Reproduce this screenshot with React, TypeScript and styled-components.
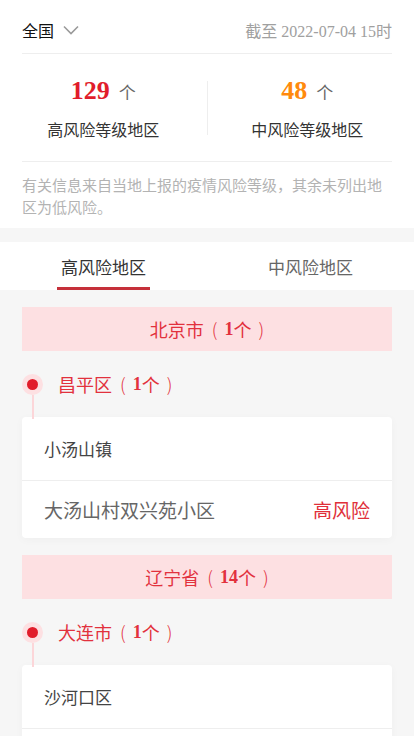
import React, { useState } from 'react'
import styled, { createGlobalStyle } from 'styled-components'

const GlobalStyle = createGlobalStyle`
  html, body {
    margin: 0;
    padding: 0;
    background: #f6f6f6;
  }

  body {
    font-family: "Noto Sans CJK SC", "Noto Sans", sans-serif;
    color: #333;
  }
`

const Page = styled.div`
  width: 414px;
  min-height: 736px;
  background: #f6f6f6;
`

const Summary = styled.section`
  background: #fff;
  padding: 0 22px;
`

const Header = styled.div`
  display: flex;
  align-items: center;
  justify-content: space-between;
  height: 47px;
  padding-top: 6px;
  border-bottom: 1px solid #eee;
`

const RegionPicker = styled.div`
  display: flex;
  align-items: center;
  gap: 9px;
  font-size: 16px;
  color: #111;
  cursor: pointer;
`

const UpdatedAt = styled.div`
  font-family: "Liberation Serif", "Noto Sans CJK SC", serif;
  font-size: 16px;
  color: #a0a0a0;
`

const Stats = styled.div`
  display: flex;
  align-items: center;
  height: 107px;
  margin: 0 -22px;
`

const StatCol = styled.div`
  box-sizing: border-box;
  flex: 0 0 calc(50% - 0.5px);
  display: flex;
  flex-direction: column;
  align-items: center;
  gap: 13px;

  &:last-child {
    padding-right: 7px;
  }
`

const StatNumber = styled.div<{ $color: string }>`
  display: flex;
  align-items: baseline;
  gap: 9px;
  height: 30px;
  font-size: 17px;
  color: #666;

  b {
    font-family: "Liberation Serif", serif;
    font-size: 26px;
    color: ${props => props.$color};
  }
`

const StatLabel = styled.div`
  font-size: 16px;
  line-height: 20px;
  color: #333;
`

const StatSeparator = styled.div`
  width: 1px;
  height: 54px;
  background: #eee;
`

const Note = styled.p`
  margin: 0;
  padding: 12px 0 10px;
  border-top: 1px solid #eee;
  font-size: 15px;
  line-height: 22px;
  color: #b3b3b3;
`

const Tabs = styled.div`
  display: flex;
  margin-top: 14px;
  height: 48px;
  background: #fff;
`

const Tab = styled.div<{ $active: boolean }>`
  position: relative;
  flex: 1;
  display: flex;
  align-items: center;
  justify-content: center;
  font-size: 17px;
  color: ${props => props.$active ? '#333' : '#666'};
  cursor: pointer;

  &::after {
    content: '';
    display: ${props => props.$active ? 'block' : 'none'};
    position: absolute;
    bottom: 0;
    left: 50%;
    width: 93px;
    height: 3px;
    margin-left: -47px;
    background: #c5303a;
  }
`

const List = styled.div`
  padding: 0 22px 24px;
`

const Province = styled.div`
  margin-top: 17px;
`

const ProvinceBanner = styled.div`
  display: flex;
  align-items: center;
  justify-content: center;
  height: 44px;
  background: #fde0e2;
  font-size: 18px;
  color: #e2313d;
`

const Count = styled.b`
  font-family: "Liberation Serif", serif;
  font-weight: bold;
`

// thin parens with air on both sides, e.g. 北京市 ( 1个 )
const Paren = styled.span<{ $side: 'open' | 'close' }>`
  margin: ${props => props.$side === 'open' ? '0 7px 0 8px' : '0 0 0 7px'};
  font-weight: 300;
`

const CityRow = styled.div`
  position: relative;
  display: flex;
  align-items: center;
  height: 66px;
  padding-left: 36px;
  font-size: 18px;
  color: #e2313d;
`

// pink ring with the red dot, plus the stem running down to the card
const CityMarker = styled.span`
  position: absolute;
  left: 0;
  top: 23px;
  width: 21px;
  height: 21px;
  border-radius: 50%;
  background: #fde0e2;

  &::before {
    content: '';
    position: absolute;
    left: 5px;
    top: 5px;
    width: 11px;
    height: 11px;
    border-radius: 50%;
    background: #e11d2b;
  }

  &::after {
    content: '';
    position: absolute;
    left: 10px;
    top: 21px;
    width: 2px;
    height: 24px;
    background: #fcd6d9;
  }
`

const Card = styled.div`
  background: #fff;
  border-radius: 4px;
  box-shadow: 0 2px 10px rgba(0, 0, 0, 0.03);
  overflow: hidden;
`

const TownRow = styled.div`
  display: flex;
  align-items: center;
  height: 63px;
  padding: 0 22px;
  font-size: 17px;
  color: #444;
`

const PlaceRow = styled.div`
  display: flex;
  align-items: center;
  justify-content: space-between;
  height: 57px;
  padding: 0 22px;
  border-top: 1px solid #eee;
  font-size: 19px;
  color: #666;
`

const RiskTag = styled.span`
  color: #e0303a;
`

function Chevron() {
  return (
    <svg width="16" height="10" viewBox="0 0 16 10" fill="none">
      <path d="M1 1.5 L8 8.5 L15 1.5" stroke="#9a9a9a" strokeWidth="1.6" />
    </svg>
  )
}

function CountLabel({ name, count }: { name: string, count: number }) {
  return (
    <>
      {name}
      <Paren $side="open">(</Paren>
      <Count>{count}</Count>个
      <Paren $side="close">)</Paren>
    </>
  )
}

interface Town {
  name: string
  places: string[]
}

interface City {
  name: string
  count: number
  towns: Town[]
}

interface ProvinceData {
  name: string
  count: number
  cities: City[]
}

const provinces: ProvinceData[] = [
  {
    name: '北京市',
    count: 1,
    cities: [
      {
        name: '昌平区',
        count: 1,
        towns: [{ name: '小汤山镇', places: ['大汤山村双兴苑小区'] }],
      },
    ],
  },
  {
    name: '辽宁省',
    count: 14,
    cities: [
      {
        name: '大连市',
        count: 1,
        towns: [{ name: '沙河口区', places: ['星海湾街道'] }],
      },
    ],
  },
]

export default function App() {
  const [tab, setTab] = useState<'high' | 'mid'>('high')

  return (
    <Page>
      <GlobalStyle />
      <Summary>
        <Header>
          <RegionPicker>
            全国
            <Chevron />
          </RegionPicker>
          <UpdatedAt>截至 2022-07-04 15时</UpdatedAt>
        </Header>
        <Stats>
          <StatCol>
            <StatNumber $color="#e11d2b"><b>129</b>个</StatNumber>
            <StatLabel>高风险等级地区</StatLabel>
          </StatCol>
          <StatSeparator />
          <StatCol>
            <StatNumber $color="#ff8a0d"><b>48</b>个</StatNumber>
            <StatLabel>中风险等级地区</StatLabel>
          </StatCol>
        </Stats>
        <Note>有关信息来自当地上报的疫情风险等级，其余未列出地区为低风险。</Note>
      </Summary>

      <Tabs>
        <Tab $active={tab === 'high'} onClick={() => setTab('high')}>高风险地区</Tab>
        <Tab $active={tab === 'mid'} onClick={() => setTab('mid')}>中风险地区</Tab>
      </Tabs>

      <List>
        {provinces.map(p => (
          <Province key={p.name}>
            <ProvinceBanner>
              <CountLabel name={p.name} count={p.count} />
            </ProvinceBanner>
            {p.cities.map(c => (
              <React.Fragment key={c.name}>
                <CityRow>
                  <CityMarker />
                  <CountLabel name={c.name} count={c.count} />
                </CityRow>
                <Card>
                  {c.towns.map(t => (
                    <React.Fragment key={t.name}>
                      <TownRow>{t.name}</TownRow>
                      {t.places.map(place => (
                        <PlaceRow key={place}>
                          {place}
                          <RiskTag>高风险</RiskTag>
                        </PlaceRow>
                      ))}
                    </React.Fragment>
                  ))}
                </Card>
              </React.Fragment>
            ))}
          </Province>
        ))}
      </List>
    </Page>
  )
}
